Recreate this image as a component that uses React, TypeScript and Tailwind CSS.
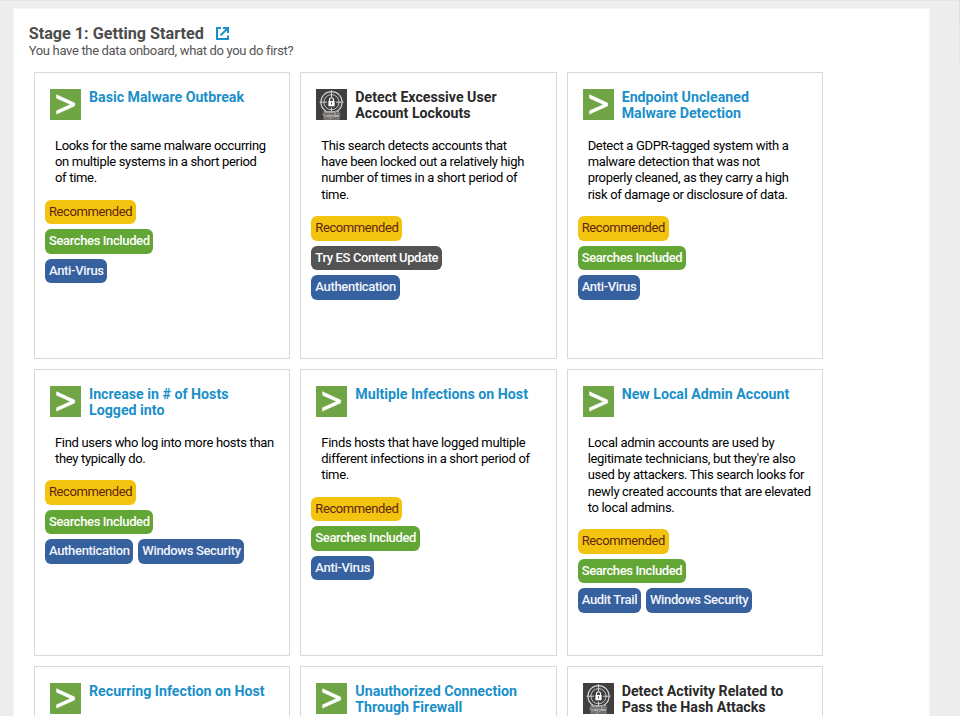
import React from "react";

type Tag = { label: string; kind: "rec" | "inc" | "es" | "src" };
type Card = { title: string[]; es?: boolean; text: string[]; tags: Tag[][] };

const rec: Tag[] = [{ label: "Recommended", kind: "rec" }];
const inc: Tag[] = [{ label: "Searches Included", kind: "inc" }];
const src = (...labels: string[]): Tag[] => labels.map((label) => ({ label, kind: "src" }));

const cards: Card[] = [
  {
    title: ["Basic Malware Outbreak"],
    text: ["Looks for the same malware occurring", "on multiple systems in a short period", "of time."],
    tags: [rec, inc, src("Anti-Virus")],
  },
  {
    title: ["Detect Excessive User", "Account Lockouts"],
    es: true,
    text: ["This search detects accounts that", "have been locked out a relatively high", "number of times in a short period of", "time."],
    tags: [rec, [{ label: "Try ES Content Update", kind: "es" }], src("Authentication")],
  },
  {
    title: ["Endpoint Uncleaned", "Malware Detection"],
    text: ["Detect a GDPR-tagged system with a", "malware detection that was not", "properly cleaned, as they carry a high", "risk of damage or disclosure of data."],
    tags: [rec, inc, src("Anti-Virus")],
  },
  {
    title: ["Increase in # of Hosts", "Logged into"],
    text: ["Find users who log into more hosts than", "they typically do."],
    tags: [rec, inc, src("Authentication", "Windows Security")],
  },
  {
    title: ["Multiple Infections on Host"],
    text: ["Finds hosts that have logged multiple", "different infections in a short period of", "time."],
    tags: [rec, inc, src("Anti-Virus")],
  },
  {
    title: ["New Local Admin Account"],
    text: ["Local admin accounts are used by", "legitimate technicians, but they're also", "used by attackers. This search looks for", "newly created accounts that are elevated", "to local admins."],
    tags: [rec, inc, src("Audit Trail", "Windows Security")],
  },
  { title: ["Recurring Infection on Host"], text: [], tags: [] },
  { title: ["Unauthorized Connection", "Through Firewall"], text: [], tags: [] },
  { title: ["Detect Activity Related to", "Pass the Hash Attacks"], es: true, text: [], tags: [] },
];

const tagStyle = {
  rec: "bg-[#f2c40f] text-[#5f2412] tracking-[-0.4px]",
  inc: "bg-[#62a636] text-white tracking-[-0.38px] font-medium",
  es: "bg-[#535353] text-white tracking-[-0.38px] font-medium",
  src: "bg-[#37609f] text-[#f1f5fb] tracking-[-0.33px] font-medium",
};

function SplunkIcon() {
  return (
    <svg viewBox="0 0 31 31" className="h-[31px] w-[31px] shrink-0">
      <rect width="31" height="31" fill="#70a545" />
      <path d="M6.4 5.6 L24.8 13.9 V17 L6.4 25.3 V21.7 L20.2 15.5 L6.4 9.2 Z" fill="#fff" stroke="#fff" strokeWidth=".3" />
    </svg>
  );
}

function EsIcon() {
  return (
    <svg viewBox="0 0 31 31" className="h-[31px] w-[31px] shrink-0">
      <rect width="31" height="31" fill="#413e3e" />
      <g fill="none" stroke="#d2d1d1">
        <circle cx="15.5" cy="13.2" r="10.6" strokeWidth="1.1" />
        <circle cx="15.5" cy="13.2" r="7.6" strokeWidth=".9" />
        <path d="M15.5 1.2V8M15.5 18.5V23M3.5 13.2H11M20 13.2H27.5" strokeWidth="1" />
        <path d="M13.5 12.5V10.7a2 2 0 0 1 4 0V12.5" stroke="#fff" strokeWidth="1.1" />
      </g>
      <rect x="12.4" y="12" width="6.2" height="5.2" rx=".5" fill="#fff" />
      <path d="M15.5 13.4v2" stroke="#413e3e" strokeWidth="1" />
      <path d="M8 22H23L24.3 26.3H23.4V30.5H7.6V26.3H6.4Z" fill="#aaa8a8" />
      <text x="15.5" y="26" textAnchor="middle" fontFamily="Roboto, sans-serif" fontWeight="700" fontSize="3.6" fill="#4b4848">Splunk ES</text>
      <text x="15.5" y="30" textAnchor="middle" fontFamily="Roboto, sans-serif" fontWeight="700" fontSize="3.6" fill="#4b4848">Use Case</text>
    </svg>
  );
}

function Lines({ lines }: { lines: string[] }) {
  return (
    <>
      {lines.map((line) => (
        <span key={line} className="block">{line}</span>
      ))}
    </>
  );
}

function ContentCard({ card }: { card: Card }) {
  return (
    <article className="h-[287px] overflow-hidden border border-[#d9d9d9] bg-white whitespace-nowrap">
      <header className="flex h-[64.5px] gap-[8px] pl-[15px] pt-[15.6px]">
        {card.es ? <EsIcon /> : <SplunkIcon />}
        <h3 className={`text-[14.2px] leading-[16.3px] font-bold ${card.es ? "text-[#292929]" : "text-[#1a8fc9]"}`}>
          <Lines lines={card.title} />
        </h3>
      </header>
      <p className="pl-[20px] text-[13px] leading-[16.35px] tracking-[-0.32px] text-black">
        <Lines lines={card.text} />
      </p>
      <div className="mt-[13px] flex flex-col gap-[5px] pl-[10px]">
        {card.tags.map((row, i) => (
          <div key={i} className="flex gap-[5px]">
            {row.map((tag) => (
              <span key={tag.label} className={`h-[24.5px] rounded-[6px] pr-[3.7px] pl-[4px] text-[13px] leading-[24px] ${tagStyle[tag.kind]}`}>
                {tag.label}
              </span>
            ))}
          </div>
        ))}
      </div>
    </article>
  );
}

export default function App() {
  return (
    <div className="flex h-[716px] w-[960px] overflow-hidden border-t border-[#e4e4e4] bg-[#ededed] pl-[13px] pt-[7px] font-['Roboto','Liberation_Sans',sans-serif]">
      <main className="h-[900px] w-[917px] shrink-0 border border-[#f5f5f5] bg-white">
        <div className="flex items-center gap-[12px] pl-[14.7px] pt-[15px]">
          <h2 className="pt-px text-[16.2px] leading-[18px] font-bold text-[#4c4c4c]">Stage 1: Getting Started</h2>
          <svg viewBox="0 0 13 13" className="h-[13px] w-[13px]" fill="none" stroke="#1a8fc9" strokeWidth="2">
            <path d="M5 1H1V12H12V8.6" />
            <path d="M4.6 8.4L11 2" />
            <path d="M7 1H12V6" />
          </svg>
        </div>
        <p className="pl-[14.7px] text-[13px] leading-[16px] tracking-[-0.33px] text-[#555]">You have the data onboard, what do you do first?</p>
        <section className="mt-[13.2px] ml-[20px] grid w-[789px] grid-cols-3 gap-[10px]">
          {cards.map((card) => (
            <ContentCard key={card.title[0]} card={card} />
          ))}
        </section>
      </main>
      <div className="-mt-[7px] ml-[29px] h-16 w-px shrink-0 bg-gradient-to-b from-[#dedede] from-[38%] to-[#dce8ee] to-[38%]" />
    </div>
  );
}
